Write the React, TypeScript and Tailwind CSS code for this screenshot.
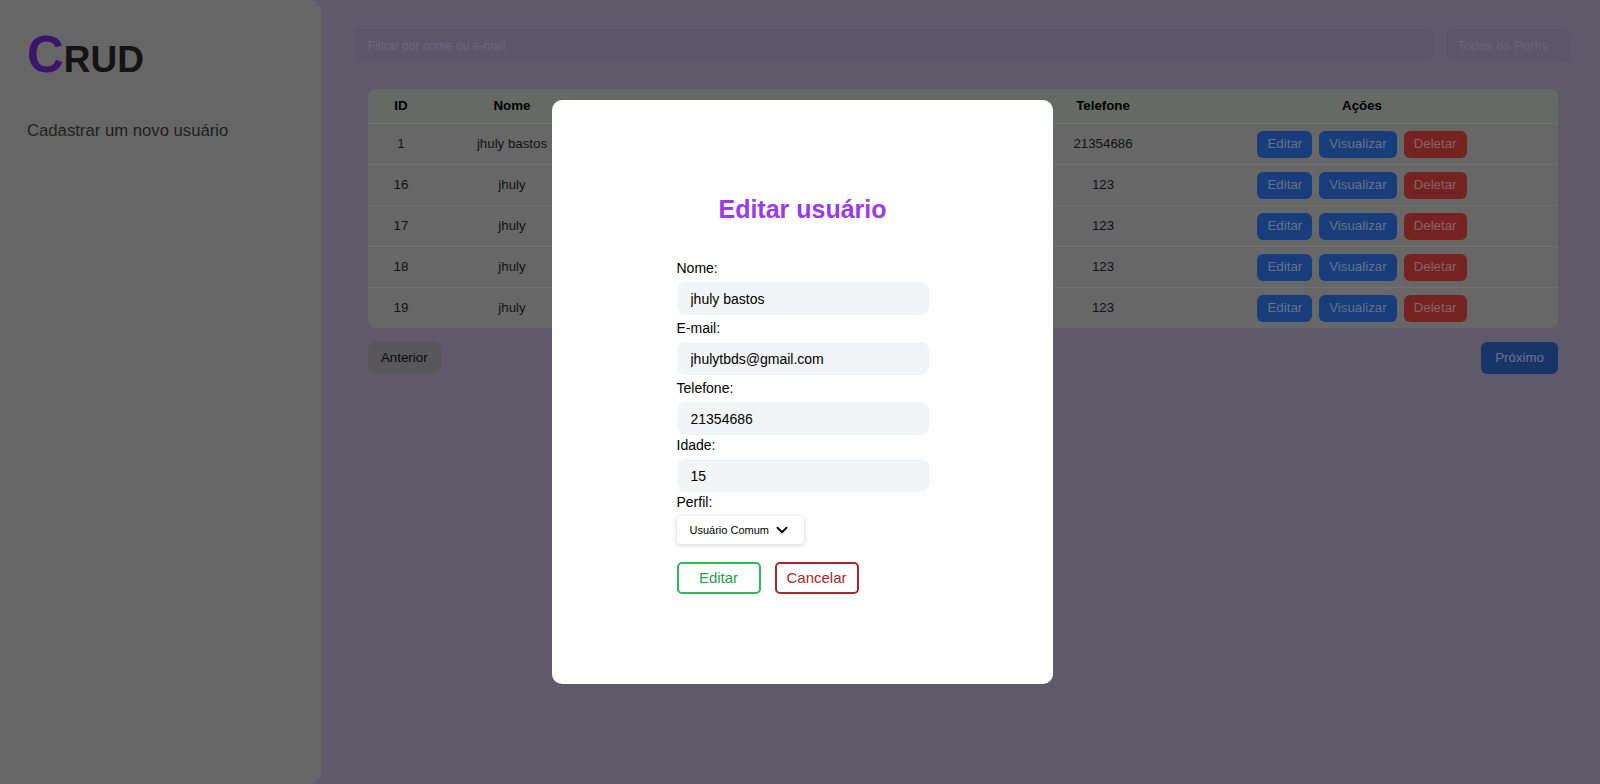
import React from "react";
import { ChevronDown } from "lucide-react";

type Usuario = {
  id: number;
  nome: string;
  email: string;
  idade: number;
  perfil: string;
  telefone: string;
};

const usuarios: Usuario[] = [
  { id: 1, nome: "jhuly bastos", email: "jhulytbds@gmail.com", idade: 15, perfil: "Usuário Comum", telefone: "21354686" },
  { id: 16, nome: "jhuly", email: "jhuly@gmail.com", idade: 20, perfil: "Usuário Comum", telefone: "123" },
  { id: 17, nome: "jhuly", email: "jhuly@gmail.com", idade: 20, perfil: "Usuário Comum", telefone: "123" },
  { id: 18, nome: "jhuly", email: "jhuly@gmail.com", idade: 20, perfil: "Usuário Comum", telefone: "123" },
  { id: 19, nome: "jhuly", email: "jhuly@gmail.com", idade: 20, perfil: "Administrador", telefone: "123" },
];

// campos do modal de edição (mt ajustado campo a campo)
const campos = [
  { label: "Nome:", valor: "jhuly bastos", mt: "mt-0" },
  { label: "E-mail:", valor: "jhulytbds@gmail.com", mt: "mt-[3px]" },
  { label: "Telefone:", valor: "21354686", mt: "mt-[3px]" },
  { label: "Idade:", valor: "15", mt: "mt-0" },
];

const cols = "grid grid-cols-[66px_156px_240px_90px_120px_126px_1fr]";

const Sidebar: React.FC = () => {
  return (
    <aside className="w-[321px] h-full shrink-0 bg-[#aaaaaa] rounded-r-xl px-[27px] pt-[29px]">
      <h1 className="leading-none font-bold text-[#222222]">
        <span className="text-[51px] text-[#6422b4]">C</span>
        <span className="text-[37px]">RUD</span>
      </h1>
      <p className="mt-[39px] text-[16.7px] leading-6 text-[#383838]">Cadastrar um novo usuário</p>
    </aside>
  );
};

const Tabela: React.FC = () => {
  return (
    <div className="mx-[13px] mt-[27px] rounded-lg overflow-hidden bg-[#acacac] text-[13.3px] text-[#222222]">
      <div className={`${cols} h-[34px] bg-[#aab1aa] font-bold text-black`}>
        {["ID", "Nome", "E-mail", "Idade", "Perfil", "Telefone", "Ações"].map((h) => (
          <div key={h} className="flex items-center justify-center">
            {h}
          </div>
        ))}
      </div>
      {usuarios.map((u) => (
        <div key={u.id} className={`${cols} h-[41px] border-t border-[#bdbdbd]`}>
          <div className="flex items-center justify-center">{u.id}</div>
          <div className="flex items-center justify-center">{u.nome}</div>
          <div className="flex items-center justify-center">{u.email}</div>
          <div className="flex items-center justify-center">{u.idade}</div>
          <div className="flex items-center justify-center">{u.perfil}</div>
          <div className="flex items-center justify-center">{u.telefone}</div>
          <div className="flex items-center justify-center gap-[7px]">
            <button className="h-[27px] px-2.5 rounded-md bg-[#2b66cd] text-[#a3bde2]">Editar</button>
            <button className="h-[27px] px-2.5 rounded-md bg-[#2b66cd] text-[#a3bde2]">Visualizar</button>
            <button className="h-[27px] px-2.5 rounded-md bg-[#c23a3a] text-[#e0a3a0]">Deletar</button>
          </div>
        </div>
      ))}
    </div>
  );
};

const ModalEditar: React.FC = () => {
  return (
    <div className="fixed inset-0 bg-black/40 flex items-center justify-center pl-[5px]">
      <div className="w-[501px] h-[584px] bg-white rounded-[10px] flex flex-col items-center pt-[93px]">
        <h2 className="text-[25px] leading-8 font-bold text-[#9b3aeb]">Editar usuário</h2>
        <div className="w-[252px] mt-[33px] text-[14px] text-black">
          {campos.map((c) => (
            <div key={c.label} className={c.mt}>
              <label className="block leading-5">{c.label}</label>
              <input
                readOnly
                defaultValue={c.valor}
                className="mt-1 w-full h-[33px] rounded-lg bg-[#f3f4f6] px-3.5 outline-none"
              />
            </div>
          ))}
          <div>
            <label className="block leading-5">Perfil:</label>
            <div className="mt-1 inline-flex h-[28px] items-center gap-1 rounded bg-white pl-[13px] pr-[13px] text-[11px] shadow-[0_1px_5px_rgba(0,0,0,0.18)]">
              Usuário Comum
              <ChevronDown size={18} strokeWidth={2.5} />
            </div>
          </div>
          <div className="mt-[18px] flex gap-[14px]">
            <button className="w-[84px] h-8 rounded-[5px] border-2 border-[#2fb855] text-[15px] text-[#22a047]">
              Editar
            </button>
            <button className="w-[84px] h-8 rounded-[5px] border-2 border-[#a9262a] text-[15px] text-[#a9262a]">
              Cancelar
            </button>
          </div>
        </div>
      </div>
    </div>
  );
};

export default function App() {
  return (
    <div className="h-screen w-full flex bg-[#9d96b1] font-['Liberation_Sans',Arial,sans-serif] overflow-hidden">
      <Sidebar />
      <main className="flex-1 pl-[34px] pr-[29px] pt-[29px]">
        <div className="flex gap-[13px]">
          <input
            readOnly
            placeholder="Filtrar por nome ou e-mail"
            className="flex-1 h-[33px] rounded-md bg-[#9891b0] px-[13px] text-[12px] outline-none placeholder:text-[#b2abcc]"
          />
          <div className="w-[125px] h-[33px] rounded-md bg-[#9891b0] flex items-center justify-between pl-[11px] pr-[4px] text-[13.3px] text-[#aca5c6]">
            Todos os Perfis
            <ChevronDown size={12} strokeWidth={2} />
          </div>
        </div>
        <Tabela />
        <div className="mx-[13px] mt-[14px] flex justify-between text-[13.3px]">
          <button className="h-8 px-[13px] rounded-md bg-[#939399] text-[#111111]">Anterior</button>
          <button className="h-8 px-[14px] rounded-md bg-[#2b58ad] text-[#b0c4e4]">Próximo</button>
        </div>
      </main>
      <ModalEditar />
    </div>
  );
}
